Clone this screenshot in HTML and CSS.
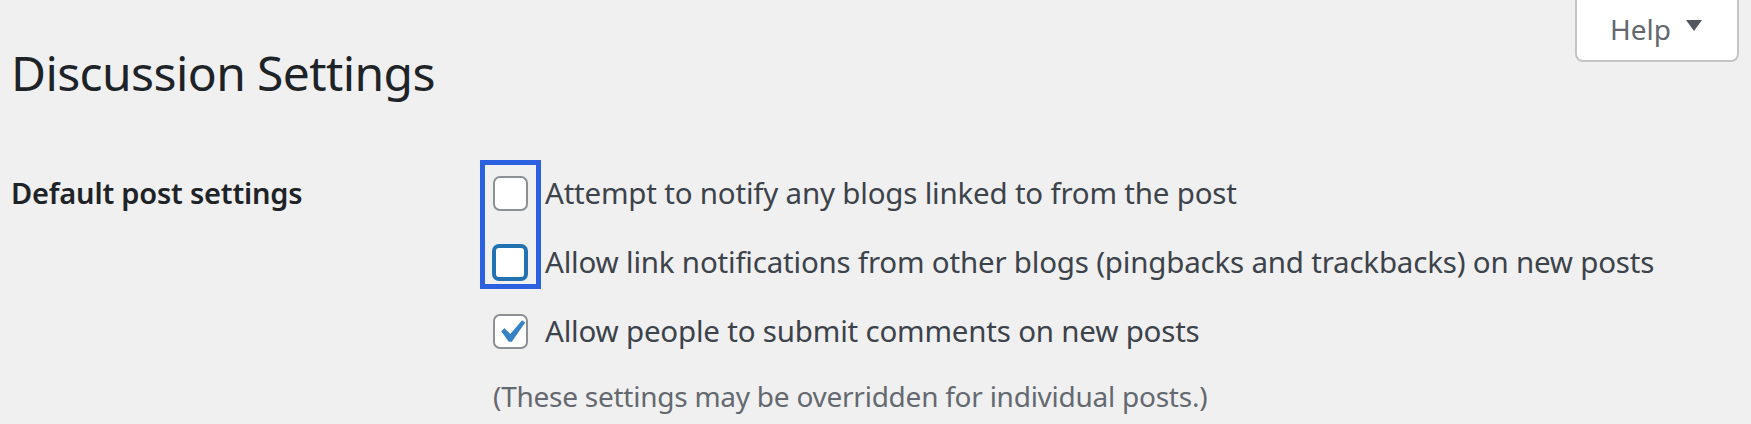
FILE: index.html
```html
<!DOCTYPE html>
<html lang="en">
<head>
<meta charset="utf-8">
<title>Discussion Settings</title>
<link rel="stylesheet" href="styles.css">
</head>
<body>
<div class="page">
  <div class="header">
    <h1 class="title">Discussion Settings</h1>
    <button class="help" type="button"><span class="help-text">Help</span><span class="help-arrow"></span></button>
  </div>
  <div class="form-row">
    <div class="th">Default post settings</div>
    <div class="td">
      <div class="focus-box"></div>
      <label class="opt"><span class="cb"></span><span>Attempt to notify any blogs linked to from the post</span></label>
      <label class="opt"><span class="cb cb-focus"></span><span>Allow link notifications from other blogs (pingbacks and trackbacks) on new posts</span></label>
      <label class="opt"><span class="cb"><svg class="check" viewBox="0 0 20 20"><path d="M14.83 4.89l1.34.94-5.81 8.38H9.02L5.78 9.67l1.34-1.25 2.57 2.4z"/></svg></span><span>Allow people to submit comments on new posts</span></label>
      <p class="note">(These settings may be overridden for individual posts.)</p>
    </div>
  </div>
</div>
</body>
</html>
```
FILE: styles.css
```css
html, body {
  margin: 0;
  padding: 0;
  background: #f0f0f1;
}
body {
  font-family: "Noto Sans", "Open Sans", sans-serif;
  color: #3c434a;
  overflow: hidden;
}
.page {
  padding: 0 12px 0 11px;
}
.header {
  display: flex;
  justify-content: space-between;
  align-items: flex-start;
}
.title {
  margin: 39px 0 0 0;
  font-size: 48px;
  letter-spacing: -0.6px;
  line-height: 68px;
  font-weight: 400;
  color: #1d2327;
}
.help {
  width: 164px;
  height: 62px;
  box-sizing: border-box;
  background: #fff;
  border: 2px solid #c3c4c7;
  border-top: none;
  border-radius: 0 0 8px 8px;
  display: flex;
  align-items: center;
  justify-content: center;
  gap: 15px;
  padding: 0 2px 2px 0;
  font-family: inherit;
  font-size: 28px;
  color: #646970;
}
.help-text {
  line-height: 40px;
}
.help-arrow {
  width: 0;
  height: 0;
  border-left: 8px solid transparent;
  border-right: 8px solid transparent;
  border-top: 11px solid #50575e;
  margin-top: -8px;
}
.form-row {
  display: flex;
  margin-top: 62px;
}
.th {
  width: 482px;
  flex: none;
  padding-top: 3px;
  font-size: 29px;
  letter-spacing: -0.2px;
  line-height: 42px;
  font-weight: 600;
  color: #1d2327;
}
.td {
  position: relative;
  padding-top: 3px;
  display: flex;
  flex-direction: column;
  gap: 27px;
}
.opt {
  display: flex;
  align-items: center;
  font-size: 29.5px;
  letter-spacing: -0.2px;
  line-height: 42px;
}
.cb {
  width: 35px;
  height: 35px;
  box-sizing: border-box;
  border: 2px solid #8c8f94;
  border-radius: 7px;
  background: #fff;
  margin-right: 17px;
  flex: none;
  display: flex;
  align-items: center;
  justify-content: center;
}
.cb-focus {
  border: 4px solid #2271b1;
  width: 36px;
  height: 37px;
  margin-left: -1px;
  margin-right: 17px;
}
.check {
  width: 46px;
  height: 46px;
  fill: #3582c4;
  flex: none;
  margin-top: 2px;
}
.note {
  margin: -4px 0 0 0;
  font-size: 28px;
  letter-spacing: -0.25px;
  line-height: 42px;
  color: #646970;
}
.focus-box {
  position: absolute;
  left: -13px;
  top: -9px;
  width: 61px;
  height: 129px;
  box-sizing: border-box;
  border: 5px solid #2b60de;
}
```
